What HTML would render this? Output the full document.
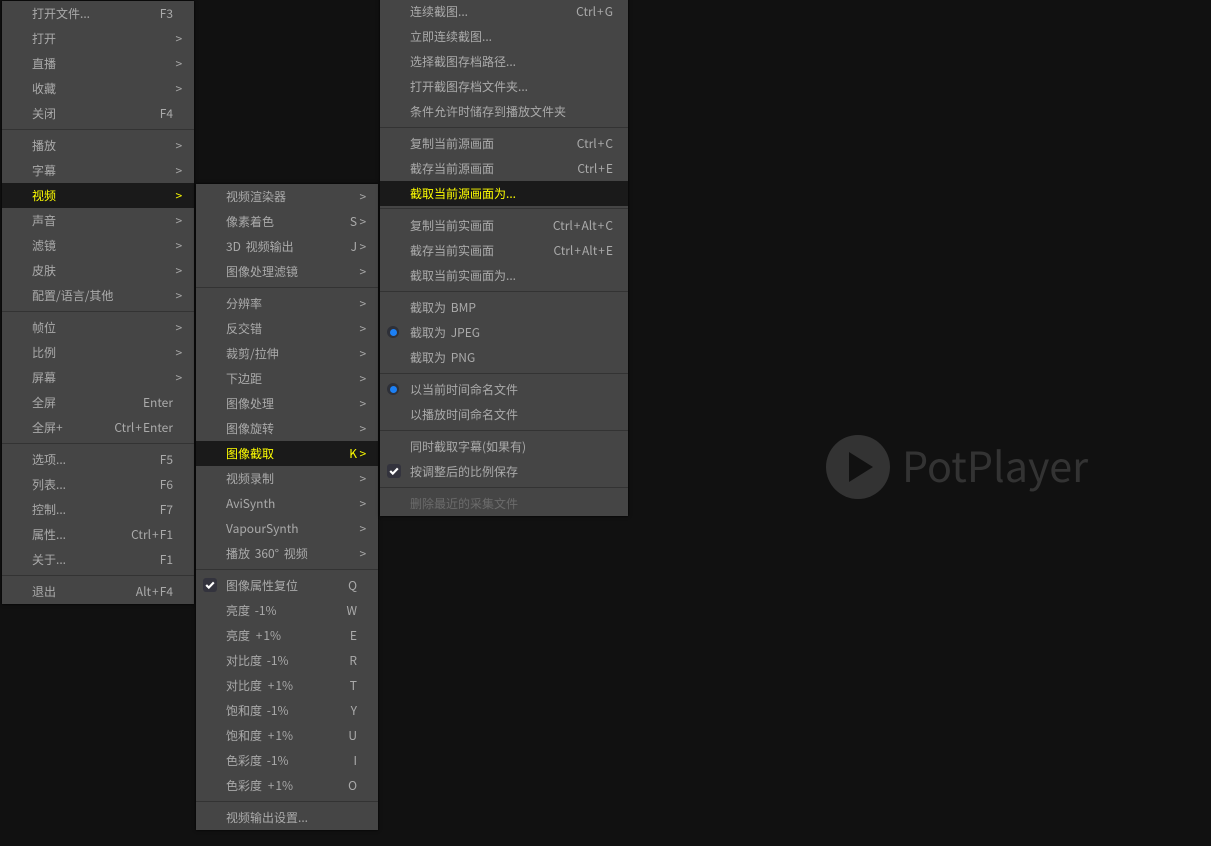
<!DOCTYPE html>
<html><head><meta charset="utf-8"><style>
html,body{margin:0;padding:0;width:1211px;height:846px;overflow:hidden;background:#111;}
body{position:relative;font:12px/25px "Noto Sans CJK SC","Liberation Sans",sans-serif;color:#aaa;word-spacing:2px;}
.m{position:absolute;background:#454545;box-shadow:0 0 3px #000;}
.r{position:absolute;left:0;right:0;height:25px;white-space:pre;}
.r b{font-weight:400;position:absolute;top:0;}
.r i{font-style:normal;position:absolute;top:0;}
.r u{text-decoration:none;position:absolute;top:0;}
.r s{text-decoration:none;margin:0 1px;}
.s{position:absolute;left:0;right:0;height:1px;background:#333;}
.h{background:#1a1a1a;color:#ff0;}
.d{color:#6b6b6b;}
#a b{left:30px}#a i{right:21px}#a u{left:173.5px}
#c b{left:30px}#c i{right:21px}#c u{left:163.5px}
#e b{left:30px}#e i{right:15px}
.c{position:absolute;width:14px;height:14px;border-radius:3px;background:#33333d;}
.c svg{display:block}
.o2{position:absolute;width:12px;height:12px;border-radius:50%;background:#2e3038;}
.o2:after{content:"";position:absolute;left:2.5px;top:2.5px;width:7px;height:7px;border-radius:50%;background:#1c80f5;}
</style></head><body>

<div class="m" id="a" style="left:2px;top:1px;width:192px;height:603px">
<div class="r" style="top:0"><b>打开文件...</b><i>F3</i></div>
<div class="r" style="top:25px"><b>打开</b><u>&gt;</u></div>
<div class="r" style="top:50px"><b>直播</b><u>&gt;</u></div>
<div class="r" style="top:75px"><b>收藏</b><u>&gt;</u></div>
<div class="r" style="top:100px"><b>关闭</b><i>F4</i></div>
<div class="s" style="top:128px"></div>
<div class="r" style="top:132px"><b>播放</b><u>&gt;</u></div>
<div class="r" style="top:157px"><b>字幕</b><u>&gt;</u></div>
<div class="r h" style="top:182px"><b>视频</b><u>&gt;</u></div>
<div class="r" style="top:207px"><b>声音</b><u>&gt;</u></div>
<div class="r" style="top:232px"><b>滤镜</b><u>&gt;</u></div>
<div class="r" style="top:257px"><b>皮肤</b><u>&gt;</u></div>
<div class="r" style="top:282px"><b>配置/语言/其他</b><u>&gt;</u></div>
<div class="s" style="top:310px"></div>
<div class="r" style="top:314px"><b>帧位</b><u>&gt;</u></div>
<div class="r" style="top:339px"><b>比例</b><u>&gt;</u></div>
<div class="r" style="top:364px"><b>屏幕</b><u>&gt;</u></div>
<div class="r" style="top:389px"><b>全屏</b><i>Enter</i></div>
<div class="r" style="top:414px"><b>全屏+</b><i>Ctrl<s>+</s>Enter</i></div>
<div class="s" style="top:442px"></div>
<div class="r" style="top:446px"><b>选项...</b><i>F5</i></div>
<div class="r" style="top:471px"><b>列表...</b><i>F6</i></div>
<div class="r" style="top:496px"><b>控制...</b><i>F7</i></div>
<div class="r" style="top:521px"><b>属性...</b><i>Ctrl<s>+</s>F1</i></div>
<div class="r" style="top:546px"><b>关于...</b><i>F1</i></div>
<div class="s" style="top:574px"></div>
<div class="r" style="top:578px"><b>退出</b><i>Alt<s>+</s>F4</i></div>
</div>

<div class="m" id="c" style="left:196px;top:184px;width:182px;height:646px">
<div class="r" style="top:0"><b>视频渲染器</b><u>&gt;</u></div>
<div class="r" style="top:25px"><b>像素着色</b><i style="right:21px">S</i><u>&gt;</u></div>
<div class="r" style="top:50px"><b>3D 视频输出</b><i style="right:21px">J</i><u>&gt;</u></div>
<div class="r" style="top:75px"><b>图像处理滤镜</b><u>&gt;</u></div>
<div class="s" style="top:103px"></div>
<div class="r" style="top:107px"><b>分辨率</b><u>&gt;</u></div>
<div class="r" style="top:132px"><b>反交错</b><u>&gt;</u></div>
<div class="r" style="top:157px"><b>裁剪/拉伸</b><u>&gt;</u></div>
<div class="r" style="top:182px"><b>下边距</b><u>&gt;</u></div>
<div class="r" style="top:207px"><b>图像处理</b><u>&gt;</u></div>
<div class="r" style="top:232px"><b>图像旋转</b><u>&gt;</u></div>
<div class="r h" style="top:257px"><b>图像截取</b><i style="right:21px">K</i><u>&gt;</u></div>
<div class="r" style="top:282px"><b>视频录制</b><u>&gt;</u></div>
<div class="r" style="top:307px"><b>AviSynth</b><u>&gt;</u></div>
<div class="r" style="top:332px"><b>VapourSynth</b><u>&gt;</u></div>
<div class="r" style="top:357px"><b>播放 360° 视频</b><u>&gt;</u></div>
<div class="s" style="top:385px"></div>
<div class="c" style="left:7px;top:394px"><svg width="14" height="14" viewBox="0 0 14 14"><path d="M3.2 7L5.8 9.6L10.8 4.4" fill="none" stroke="#fff" stroke-width="2.2"/></svg></div>
<div class="r" style="top:389px"><b>图像属性复位</b><i>Q</i></div>
<div class="r" style="top:414px"><b>亮度 -1%</b><i>W</i></div>
<div class="r" style="top:439px"><b>亮度 <s>+</s>1%</b><i>E</i></div>
<div class="r" style="top:464px"><b>对比度 -1%</b><i>R</i></div>
<div class="r" style="top:489px"><b>对比度 <s>+</s>1%</b><i>T</i></div>
<div class="r" style="top:514px"><b>饱和度 -1%</b><i>Y</i></div>
<div class="r" style="top:539px"><b>饱和度 <s>+</s>1%</b><i>U</i></div>
<div class="r" style="top:564px"><b>色彩度 -1%</b><i>I</i></div>
<div class="r" style="top:589px"><b>色彩度 <s>+</s>1%</b><i>O</i></div>
<div class="s" style="top:617px"></div>
<div class="r" style="top:621px"><b>视频输出设置...</b></div>
</div>

<div class="m" id="e" style="left:380px;top:-2px;width:248px;height:518px">
<div class="r" style="top:1px"><b>连续截图...</b><i>Ctrl<s>+</s>G</i></div>
<div class="r" style="top:26px"><b>立即连续截图...</b></div>
<div class="r" style="top:51px"><b>选择截图存档路径...</b></div>
<div class="r" style="top:76px"><b>打开截图存档文件夹...</b></div>
<div class="r" style="top:101px"><b>条件允许时储存到播放文件夹</b></div>
<div class="s" style="top:129px"></div>
<div class="r" style="top:133px"><b>复制当前源画面</b><i>Ctrl<s>+</s>C</i></div>
<div class="r" style="top:158px"><b>截存当前源画面</b><i>Ctrl<s>+</s>E</i></div>
<div class="r h" style="top:183px"><b>截取当前源画面为...</b></div>
<div class="s" style="top:210px"></div>
<div class="r" style="top:215px"><b>复制当前实画面</b><i>Ctrl<s>+</s>Alt<s>+</s>C</i></div>
<div class="r" style="top:240px"><b>截存当前实画面</b><i>Ctrl<s>+</s>Alt<s>+</s>E</i></div>
<div class="r" style="top:265px"><b>截取当前实画面为...</b></div>
<div class="s" style="top:293px"></div>
<div class="r" style="top:297px"><b>截取为 BMP</b></div>
<div class="o2" style="left:7px;top:328px"></div>
<div class="r" style="top:322px"><b>截取为 JPEG</b></div>
<div class="r" style="top:347px"><b>截取为 PNG</b></div>
<div class="s" style="top:375px"></div>
<div class="o2" style="left:7px;top:385px"></div>
<div class="r" style="top:379px"><b>以当前时间命名文件</b></div>
<div class="r" style="top:404px"><b>以播放时间命名文件</b></div>
<div class="s" style="top:432px"></div>
<div class="r" style="top:436px"><b>同时截取字幕(如果有)</b></div>
<div class="c" style="left:7px;top:466px"><svg width="14" height="14" viewBox="0 0 14 14"><path d="M3.2 7L5.8 9.6L10.8 4.4" fill="none" stroke="#fff" stroke-width="2.2"/></svg></div>
<div class="r" style="top:461px"><b>按调整后的比例保存</b></div>
<div class="s" style="top:489px"></div>
<div class="r d" style="top:493px"><b>删除最近的采集文件</b></div>
</div>

<svg style="position:absolute;left:826px;top:435px" width="64" height="64" viewBox="0 0 64 64"><circle cx="32" cy="32" r="32" fill="#333"/><path d="M23 17L47 32L23 47Z" fill="#111"/></svg>
<div style="position:absolute;left:902px;top:434px;font:41.3px/60px 'Noto Sans CJK SC','Liberation Sans',sans-serif;color:#333;white-space:pre;word-spacing:0">PotPlayer</div>
</body></html>
